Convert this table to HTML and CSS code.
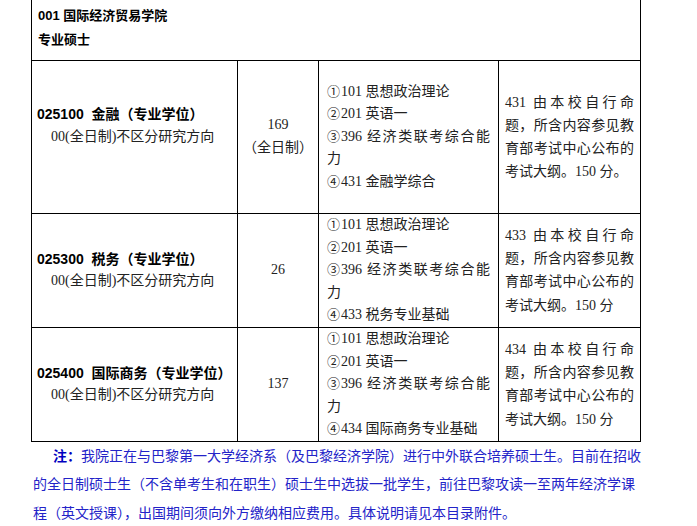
FILE: index.html
```html
<!DOCTYPE html>
<html lang="zh-CN">
<head>
<meta charset="utf-8">
<title>001 国际经济贸易学院</title>
<link rel="stylesheet" href="styles.css">
</head>
<body>
<table class="tbl">
  <colgroup>
    <col class="c1"><col class="c2"><col class="c3"><col class="c4">
  </colgroup>
  <tr>
    <td class="head" colspan="4">
      <div>001 国际经济贸易学院</div>
      <div>专业硕士</div>
    </td>
  </tr>
  <tr class="r1">
    <td class="major">
      <div class="mname">025100&nbsp; 金融（专业学位）</div>
      <div class="dir">00(全日制)不区分研究方向</div>
      <div class="blank">&nbsp;</div>
    </td>
    <td class="num">
      <div>169</div>
      <div>（全日制）</div>
    </td>
    <td class="subj">
      <div><span class="circ">①</span>101 思想政治理论</div>
      <div><span class="circ">②</span>201 英语一</div>
      <div class="jl"><span class="circ">③</span>396 经济类联考综合能</div>
      <div>力</div>
      <div><span class="circ">④</span>431 金融学综合</div>
    </td>
    <td class="desc">431 由本校自行命题，所含内容参见教育部考试中心公布的考试大纲。150 分。</td>
  </tr>
  <tr>
    <td class="major">
      <div class="mname">025300&nbsp; 税务（专业学位）</div>
      <div class="dir">00(全日制)不区分研究方向</div>
    </td>
    <td class="num">
      <div>26</div>
    </td>
    <td class="subj">
      <div><span class="circ">①</span>101 思想政治理论</div>
      <div><span class="circ">②</span>201 英语一</div>
      <div class="jl"><span class="circ">③</span>396 经济类联考综合能</div>
      <div>力</div>
      <div><span class="circ">④</span>433 税务专业基础</div>
    </td>
    <td class="desc">433 由本校自行命题，所含内容参见教育部考试中心公布的考试大纲。150 分</td>
  </tr>
  <tr>
    <td class="major">
      <div class="mname">025400&nbsp; 国际商务（专业学位）</div>
      <div class="dir">00(全日制)不区分研究方向</div>
    </td>
    <td class="num">
      <div>137</div>
    </td>
    <td class="subj">
      <div><span class="circ">①</span>101 思想政治理论</div>
      <div><span class="circ">②</span>201 英语一</div>
      <div class="jl"><span class="circ">③</span>396 经济类联考综合能</div>
      <div>力</div>
      <div><span class="circ">④</span>434 国际商务专业基础</div>
    </td>
    <td class="desc">434 由本校自行命题，所含内容参见教育部考试中心公布的考试大纲。150 分</td>
  </tr>
</table>
<div class="note">
  <div class="nline first"><b class="note-label">注：</b>我院正在与巴黎第一大学经济系（及巴黎经济学院）进行中外联合培养硕士生。目前在招收</div>
  <div class="nline">的全日制硕士生（不含单考生和在职生）硕士生中选拔一批学生，前往巴黎攻读一至两年经济学课</div>
  <div class="nline last">程（英文授课），出国期间须向外方缴纳相应费用。具体说明请见本目录附件。</div>
</div>
</body>
</html>
```

FILE: styles.css
```css
html, body {
  margin: 0;
  padding: 0;
  background: #fff;
}

body {
  font-family: "Liberation Serif", "Noto Sans CJK SC", serif;
  font-size: 14px;
  color: #222;
}

.tbl {
  margin-left: 31px;
  border-collapse: collapse;
  table-layout: fixed;
  width: 609px;
}

.c1 { width: 206px; }
.c2 { width: 81px; }
.c3 { width: 180px; }
.c4 { width: 142px; }

.tbl td {
  border: 1px solid #000;
  padding: 0;
  line-height: 22.6px;
  vertical-align: middle;
}

.tbl td.head {
  border-top: none;
  padding: 4px 6px 8px 6px;
  line-height: 24px;
  font-family: "Liberation Sans", "Noto Sans CJK SC", sans-serif;
  font-weight: bold;
  font-size: 13px;
  color: #000;
}

.r1 {
  height: 153px;
}

.tbl td.major {
  padding-left: 5px;
}

.mname {
  font-family: "Liberation Sans", "Noto Sans CJK SC", sans-serif;
  font-weight: bold;
  color: #000;
}

.dir {
  padding-left: 14px;
}

.tbl td.num {
  text-align: center;
}

.tbl td.subj {
  padding: 0 8px 0 8px;
  white-space: nowrap;
}

.subj > div {
  height: 22.6px;
}

.circ {
  font-family: "Noto Sans CJK SC", sans-serif;
  font-size: 13px;
  line-height: 0;
  display: inline-block;
  width: 14px;
}

.jl {
  text-align: justify;
  text-align-last: justify;
}

.tbl td.desc {
  padding: 0 6px 0 6px;
  text-align: justify;
  line-height: 23.1px;
}

.note {
  padding-left: 33px;
  width: 600px;
  line-height: 28.5px;
  color: #2323c8;
  font-size: 14px;
}

.nline {
  white-space: nowrap;
  text-align: justify;
  text-align-last: justify;
}

.nline.first {
  padding-left: 20px;
}

.nline.last {
  text-align-last: auto;
}

.note-label {
  color: #0000c0;
  font-family: "Liberation Sans", "Noto Sans CJK SC", sans-serif;
}
```
